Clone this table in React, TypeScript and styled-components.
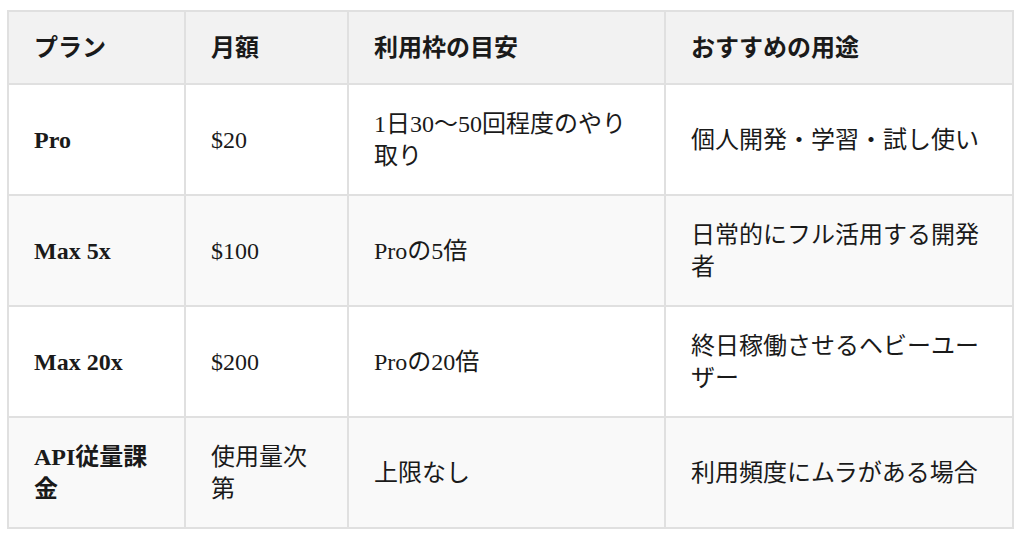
import styled, { createGlobalStyle } from 'styled-components';

const GlobalStyle = createGlobalStyle`
  body {
    margin: 0;
    background: #fff;
    font-family: 'Liberation Serif', 'Noto Sans CJK JP', serif;
    color: #1a1a1a;
  }
`;

type Plan = {
  name: string;
  price: string;
  limit: string;
  usage: string;
};

const plans: Plan[] = [
  { name: 'Pro', price: '$20', limit: '1日30〜50回程度のやり取り', usage: '個人開発・学習・試し使い' },
  { name: 'Max 5x', price: '$100', limit: 'Proの5倍', usage: '日常的にフル活用する開発者' },
  { name: 'Max 20x', price: '$200', limit: 'Proの20倍', usage: '終日稼働させるヘビーユーザー' },
  { name: 'API従量課金', price: '使用量次第', limit: '上限なし', usage: '利用頻度にムラがある場合' },
];

const headers = ['プラン', '月額', '利用枠の目安', 'おすすめの用途'];
const widths = [177, 163, 317, 348];

export default function App() {
  return (
    <Page>
      <GlobalStyle />
      <PlanTable>
        <colgroup>
          {widths.map((w, i) => (
            <col key={i} style={{ width: w }} />
          ))}
        </colgroup>
        <thead>
          <tr>
            {headers.map((h) => (
              <HeadCell key={h}>{h}</HeadCell>
            ))}
          </tr>
        </thead>
        <tbody>
          {plans.map((p) => (
            <Row key={p.name}>
              <Cell $bold>{p.name}</Cell>
              <Cell>{p.price}</Cell>
              <Cell>{p.limit}</Cell>
              <Cell>{p.usage}</Cell>
            </Row>
          ))}
        </tbody>
      </PlanTable>
    </Page>
  );
}

const Page = styled.div`
  padding: 10px 12px 10px 7px;
`;

const PlanTable = styled.table`
  width: 1005px;
  table-layout: fixed;
  border-collapse: collapse;
  font-size: 24px;
  line-height: 32px;
`;

const HeadCell = styled.th`
  background: #f2f2f2;
  border: 2px solid #e0e0e0;
  padding: 20px 25px 19px;
  text-align: left;
  font-weight: 700;
  vertical-align: middle;
`;

const Row = styled.tr`
  background: #fff;
  &:nth-child(even) {
    background: #f9f9f9;
  }
`;

const Cell = styled.td<{ $bold?: boolean }>`
  border: 2px solid #e0e0e0;
  padding: 22.5px 25px;
  text-align: left;
  vertical-align: middle;
  font-weight: ${(p) => (p.$bold ? 700 : 400)};
  word-break: normal;
  line-break: strict;
`;
